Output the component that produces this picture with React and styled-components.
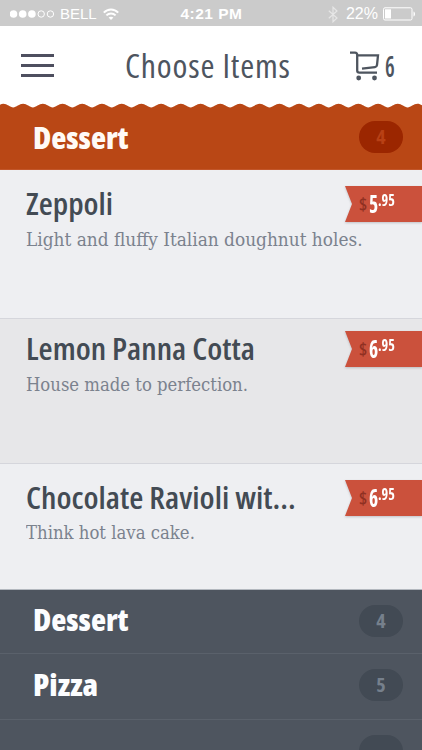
/* eslint-disable react/prop-types */
import styled, { createGlobalStyle } from "styled-components";

const GlobalStyle = createGlobalStyle`
    * {
        box-sizing: border-box;
    }

    body {
        margin: 0;
        overflow: hidden;
        background: #4e555f;
    }
`;

const Screen = styled.div`
    width: 422px;
    height: 750px;
    overflow: hidden;
    display: flex;
    flex-direction: column;
    font-family: "Open Sans", "Noto Sans", sans-serif;
    font-stretch: 75%;
`;

const Squeeze = styled.span`
    display: inline-block;
    white-space: nowrap;
    transform: scaleX(${(props) => props.$x});
    transform-origin: left center;
`;

const StatusBar = styled.div`
    flex: none;
    height: 26px;
    display: grid;
    grid-template-columns: 1fr auto 1fr;
    align-items: center;
    padding: 2px 6px 0 10px;
    background: #cbcbcb;
    color: white;
    font-family: "Liberation Sans", sans-serif;
    font-stretch: normal;
    font-size: 15px;
    line-height: 24px;
`;

const StatusGroup = styled.div`
    display: flex;
    align-items: center;
    justify-content: ${(props) => (props.$end ? "flex-end" : "flex-start")};
`;

const Carrier = styled.span`
    width: 43px;
    margin-left: 4px;
`;

const Battery = styled.span`
    margin: 0 5px 0 8px;
    font-size: 16px;
`;

const Time = styled.span`
    padding-right: 3px;
    font-weight: bold;
    font-size: 15.5px;
    letter-spacing: 0.5px;
`;

const Header = styled.header`
    flex: none;
    height: 77px;
    display: grid;
    grid-template-columns: 104px 1fr 72px;
    align-items: center;
    padding: 2px 0 0 21px;
    background: white;
    color: #4e555f;
`;

const MenuButton = styled.button`
    width: 33px;
    height: 23px;
    padding: 0;
    display: flex;
    flex-direction: column;
    justify-content: space-between;
    border: 0;
    background: none;

    span {
        height: 3px;
        background: #4e4f5f;
    }
`;

const Title = styled.h1`
    margin: 0;
    font-size: 32.5px;
    font-weight: 380;
    line-height: 44px;
    letter-spacing: 0.8px;
`;

const Cart = styled.div`
    display: flex;
    align-items: center;
    gap: 5px;
    font-size: 29px;
    font-weight: 600;
    line-height: 36px;
`;

const Scallops = styled.svg`
    flex: none;
    display: block;
    background: white;
`;

const Category = styled.div`
    flex: none;
    height: ${(props) => props.$height}px;
    display: flex;
    align-items: flex-start;
    justify-content: space-between;
    padding: ${(props) => props.$top}px 19px 0 33px;
    background: ${(props) => (props.$active ? "#b94715" : "#4e555f")};
    border-bottom: 1px solid ${(props) => (props.$active ? "#c2562a" : "#5a616b")};
`;

const CategoryName = styled.h2`
    margin: 0;
    color: ${(props) => (props.$active ? "#fffaf6" : "#fcfdff")};
    font-size: 30.5px;
    font-weight: 800;
    line-height: 36px;
`;

const Count = styled.span`
    width: 44px;
    height: 32px;
    margin-top: ${(props) => props.$offset || 0}px;
    border-radius: 16px;
    text-align: center;
    font-size: 20px;
    font-weight: 700;
    line-height: 32px;
    color: ${(props) => (props.$active ? "#b84015" : "#76808c")};
    background: ${(props) => (props.$active ? "#9b2600" : "#424a54")};
`;

const Item = styled.article`
    flex: none;
    height: ${(props) => props.$height}px;
    padding: ${(props) => props.$top}px 0 0 26px;
    background: ${(props) => (props.$shaded ? "#e7e7e9" : "#eeeff2")};
    border-bottom: 1px solid ${(props) => props.$line};
`;

const ItemHead = styled.div`
    display: flex;
    justify-content: space-between;
    align-items: flex-start;
    height: 36px;
`;

const ItemName = styled.h3`
    margin: 0;
    width: 300px;
    color: #434b54;
    font-size: 30px;
    font-weight: 560;
    line-height: 36px;
`;

const Ribbon = styled.div`
    width: 77px;
    height: 36px;
    margin-top: ${(props) => props.$offset}px;
    padding-left: 14px;
    display: flex;
    background: #cb513c;
    clip-path: polygon(0 0, 100% 0, 100% 100%, 0 100%, 7px 50%);
    color: white;
    font-weight: 700;
    line-height: 35px;
`;

const RibbonShadow = styled.div`
    filter: drop-shadow(0 1px 1px rgba(60, 60, 70, 0.25));
`;

const Dollar = styled.span`
    width: 10px;
    color: #8f3022;
    font-size: 18px;
    font-weight: 600;
    line-height: 37px;
`;

const Whole = styled.span`
    width: 9px;
    font-size: 25px;
`;

const Cents = styled.span`
    font-size: 16px;
    line-height: 29px;
`;

const Description = styled.p`
    margin: ${(props) => props.$gap}px 0 0;
    color: #7b828e;
    font-family: "DejaVu Serif", serif;
    font-stretch: normal;
    font-size: 18px;
    line-height: 24px;
`;

const items = [
    {
        name: "Zeppoli",
        text: "Light and fluffy Italian doughnut holes.",
        whole: 5,
        nameScale: 1.075,
        textScale: 0.942,
        height: 149,
        top: 16,
        ribbon: 0,
        gap: 6,
        line: "#d5d6dc",
    },
    {
        name: "Lemon Panna Cotta",
        text: "House made to perfection.",
        whole: 6,
        nameScale: 1.08,
        textScale: 0.915,
        height: 145,
        top: 12,
        ribbon: 0,
        gap: 6,
        line: "#d5d6dc",
        shaded: true,
    },
    {
        name: "Chocolate Ravioli wit...",
        text: "Think hot lava cake.",
        whole: 6,
        nameScale: 1.081,
        textScale: 0.917,
        height: 126,
        top: 16,
        ribbon: 0,
        gap: 5,
        line: "#b3b8bf",
    },
];

function SignalDots() {
    return (
        <svg width="46" height="10" viewBox="0 0 46 10">
            {[3.5, 12.7, 21.9].map((x) => (
                <circle key={x} cx={x} cy="5" r="3.8" fill="white" />
            ))}
            {[31.2, 40.4].map((x) => (
                <circle key={x} cx={x} cy="5" r="3.2" fill="none" stroke="white" />
            ))}
        </svg>
    );
}

function WifiIcon() {
    return (
        <svg width="16" height="13" viewBox="0 0 16 13" fill="none" stroke="white" strokeWidth="2">
            <path d="M0.8 4.6 C4.8 0.3 11.2 0.3 15.2 4.6" />
            <path d="M3.4 7.4 C6 4.8 10 4.8 12.6 7.4" />
            <path d="M5.6 9.6 C7 8.3 9 8.3 10.4 9.6 L8 12 Z" fill="white" stroke="none" />
        </svg>
    );
}

function BluetoothIcon() {
    return (
        <svg width="10" height="17" viewBox="0 0 10 17" fill="none" stroke="#e6e6e6" strokeWidth="1.2">
            <path d="M0.8 4.7 L9 12 L5 15.8 V1.2 L9 5 L0.8 12.3" />
        </svg>
    );
}

function BatteryIcon() {
    return (
        <svg width="33" height="14" viewBox="0 0 33 14">
            <rect x="0.5" y="0.8" width="28.5" height="12.2" rx="1.5" fill="none" stroke="white" />
            <rect x="2" y="2.3" width="6" height="9.2" fill="white" />
            <path d="M30.5 4.5 C32.5 5 32.5 9 30.5 9.5 Z" fill="white" />
        </svg>
    );
}

function CartIcon() {
    return (
        <svg width="30" height="30" viewBox="0 0 30 30" fill="none" stroke="#4e555f" strokeWidth="2.3">
            <path d="M0 1.6 H5 Q7.2 1.6 7.2 4 V19.5 Q7.2 21.6 9.4 21.6 H27" />
            <path d="M7.2 4.4 H28 L27 14 Q26.6 16 25 16.2 L12 17.6" />
            <circle cx="8.7" cy="27" r="2.4" fill="#4e555f" stroke="none" />
            <circle cx="24.5" cy="27" r="2.4" fill="#4e555f" stroke="none" />
        </svg>
    );
}

function ScallopedEdge() {
    const waves = Array.from({ length: 23 }, (_, i) => {
        const x = i * 19.72 - 6.5;
        return `C${x + 3} 4.5 ${x + 6} 0.8 ${x + 9.86} 0.8 C${x + 13.7} 0.8 ${x + 16.7} 4.5 ${x + 19.72} 4.5`;
    });
    return (
        <Scallops width="422" height="5" viewBox="0 0 422 5">
            <path d={`M-6.5 5 V4.5 ${waves.join(" ")} V5 Z`} fill="#b94715" />
        </Scallops>
    );
}

function MenuItem({ item }) {
    return (
        <Item $height={item.height} $top={item.top} $shaded={item.shaded} $line={item.line}>
            <ItemHead>
                <ItemName>
                    <Squeeze $x={item.nameScale}>{item.name}</Squeeze>
                </ItemName>
                <RibbonShadow>
                    <Ribbon $offset={item.ribbon}>
                        <Dollar>$</Dollar>
                        <Whole>
                            <Squeeze $x={0.78}>{item.whole}</Squeeze>
                        </Whole>
                        <Cents>
                            <Squeeze $x={0.88}>.95</Squeeze>
                        </Cents>
                    </Ribbon>
                </RibbonShadow>
            </ItemHead>
            <Description $gap={item.gap}>
                <Squeeze $x={item.textScale}>{item.text}</Squeeze>
            </Description>
        </Item>
    );
}

function App() {
    return (
        <Screen>
            <GlobalStyle />
            <StatusBar>
                <StatusGroup>
                    <SignalDots />
                    <Carrier>
                        <Squeeze $x={1}>BELL</Squeeze>
                    </Carrier>
                    <WifiIcon />
                </StatusGroup>
                <Time>4:21 PM</Time>
                <StatusGroup $end>
                    <BluetoothIcon />
                    <Battery>22%</Battery>
                    <BatteryIcon />
                </StatusGroup>
            </StatusBar>
            <Header>
                <MenuButton aria-label="Menu">
                    <span />
                    <span />
                    <span />
                </MenuButton>
                <Title>
                    <Squeeze $x={1.04}>Choose Items</Squeeze>
                </Title>
                <Cart>
                    <CartIcon />
                    <Squeeze $x={0.75}>6</Squeeze>
                </Cart>
            </Header>
            <ScallopedEdge />
            <Category $active $height={62} $top={11}>
                <CategoryName $active>
                    <Squeeze $x={1.02}>Dessert</Squeeze>
                </CategoryName>
                <Count $active $offset={2}>4</Count>
            </Category>
            {items.map((item) => (
                <MenuItem key={item.name} item={item} />
            ))}
            <Category $height={64} $top={11}>
                <CategoryName>
                    <Squeeze $x={1.02}>Dessert</Squeeze>
                </CategoryName>
                <Count $offset={4}>4</Count>
            </Category>
            <Category $height={66} $top={12}>
                <CategoryName>
                    <Squeeze $x={1.03}>Pizza</Squeeze>
                </CategoryName>
                <Count $offset={3}>5</Count>
            </Category>
            <Category $height={66} $top={15}>
                <CategoryName />
                <Count />
            </Category>
        </Screen>
    );
}

export default App;
